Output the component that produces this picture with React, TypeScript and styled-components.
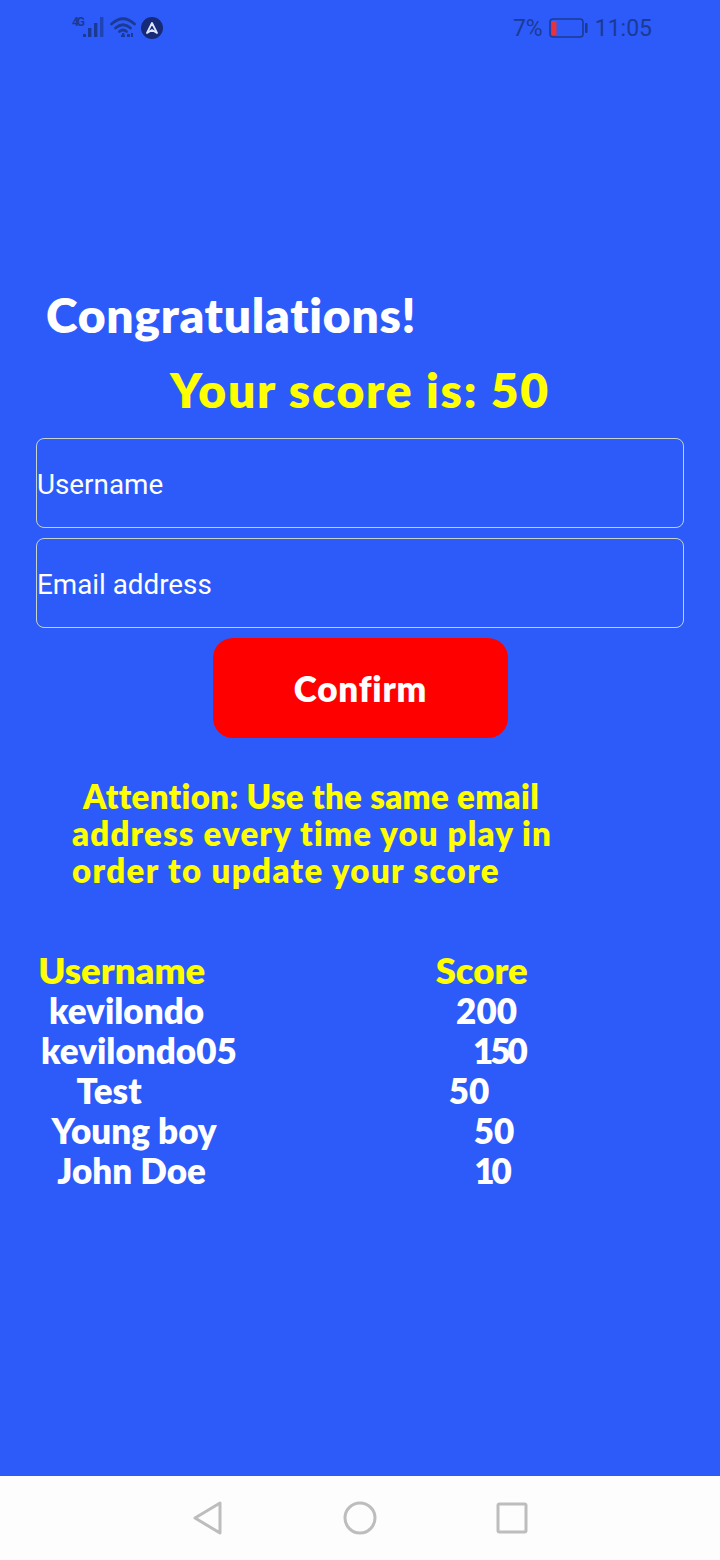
import React from "react";
import styled, { createGlobalStyle } from "styled-components";

const Global = createGlobalStyle`
  html, body { margin: 0; padding: 0; background: #2d5bfa; }
  * { box-sizing: border-box; }
`;
const hand = `"Lato", "Noto Sans", sans-serif`;
const Page = styled.div`
  width: 720px; height: 1560px; overflow: hidden; background: #2d5bfa;
  display: flex; flex-direction: column;
`;
const StatusBar = styled.div`
  height: 56px; flex: none; display: flex; justify-content: space-between; align-items: center;
  padding: 0 68px 0 71px; color: #1b3a94;
  font-family: "Roboto", sans-serif; font-size: 23px;
`;
const StatusGroup = styled.div`display: flex; align-items: center; gap: 6px;`;
const Main = styled.main`flex: 1; display: flex; flex-direction: column; padding-top: 229px;`;
const Title = styled.h1`
  margin: 0; padding-left: 46px; font: 800 48px/60px ${hand}; color: #fff; letter-spacing: 0.7px;
`;
const Score = styled.h2`
  margin: 15px 0 18px; text-align: center; font: 800 48px/60px ${hand}; color: #ffff00; letter-spacing: 1.7px;
`;
const Field = styled.input`
  display: block; width: 648px; height: 90px; margin: 0 36px 10px; padding: 2px 0 0; background: transparent;
  border: 1px solid #c4d4c8; border-radius: 8px; outline: none;
  font: 400 27.8px "Roboto", sans-serif; color: #fff;
  &::placeholder { color: #fff; opacity: 1; }
`;
const Confirm = styled.button`
  display: block; width: 295px; height: 100px; margin: 0 0 40px 213px; border: 0; border-radius: 20px;
  background: #ff0000; color: #fff; font: 800 35px ${hand}; letter-spacing: .8px;
`;
const Notice = styled.p`
  margin: 0 0 60px; padding-left: 72px; color: #ffff00;
  font: 800 33px/37.2px ${hand};
`;
const NoticeLine = styled.span<{ $spacing: number; $indent?: number }>`
  display: block; white-space: nowrap;
  letter-spacing: ${(p) => p.$spacing}px;
  margin-left: ${(p) => p.$indent ?? 0}px;
`;
const Table = styled.div`margin-left: -77px; width: 720px; display: flex; flex-direction: column;`;
const Row = styled.div<{ $head?: boolean }>`
  height: 40px; display: flex; justify-content: space-around; align-items: center;
  font: 800 ${(p) => (p.$head ? "36.5px" : "35px")}/40px ${hand};
  color: ${(p) => (p.$head ? "#ffff00" : "#fff")};
  white-space: nowrap;
`;
const Points = styled.span<{ $tight?: boolean }>`
  letter-spacing: ${(p) => (p.$tight ? "-3px" : "0")};
`;
const Nav = styled.nav`
  height: 84px; flex: none; background: #fdfdfe; display: flex; align-items: center; justify-content: center;
`;
const NavSlot = styled.div`width: 152px; display: flex; justify-content: center;`;

const rows = [
  ["kevilondo", "200"],
  ["kevilondo05", "150"],
  ["Test", "50"],
  ["Young boy", "50"],
  ["John Doe", "10"],
];

export default function App() {
  return (
    <>
      <Global />
      <Page>
        <StatusBar>
          <StatusGroup>
            <svg width="92" height="26" viewBox="0 0 92 26">
              <text x="1" y="10.5" fontSize="12" fontWeight="700" fontFamily="Roboto" fill="#1b3a94" textLength="13">4G</text>
              <g fill="#1b3a94">
                <rect x="12" y="19" width="3" height="3" />
                <rect x="17" y="13" width="3.4" height="9" />
                <rect x="23" y="8" width="3.4" height="14" />
                <rect x="29" y="2" width="3.4" height="20" opacity=".7" />
              </g>
              <g fill="none" stroke="#1b3a94" strokeWidth="2.8" strokeLinecap="round">
                <path d="M40.5 9 Q52 -1.5 63.5 9" />
                <path d="M44.5 13 Q52 6.5 59.5 13" />
                <path d="M48.5 16.5 Q52 13.5 55.5 16.5" />
              </g>
              <g fill="#1b3a94">
                <rect x="51" y="18" width="2.4" height="2.4" />
                <rect x="50" y="20" width="4" height="2" />
                <rect x="56" y="19" width="3" height="3" />
                <rect x="60" y="18" width="2" height="4" />
              </g>
              <circle cx="81" cy="13" r="11" fill="#172a78" />
              <path d="M76 18 L81 8 L86 18 L81 15 Z" fill="none" stroke="#dfe6ff" strokeWidth="1.8" strokeLinejoin="round" />
            </svg>
          </StatusGroup>
          <StatusGroup>
            <span>7%</span>
            <svg width="40" height="20" viewBox="0 0 40 20">
              <rect x="1" y="1" width="33" height="18" rx="3" fill="none" stroke="#1b3a94" strokeWidth="1.6" />
              <rect x="2.5" y="3" width="5" height="14" fill="#e8323c" />
              <rect x="36" y="5" width="2.6" height="10" rx="1" fill="#1b3a94" />
            </svg>
            <span>11:05</span>
          </StatusGroup>
        </StatusBar>
        <Main>
          <Title>Congratulations!</Title>
          <Score>Your score is: 50</Score>
          <Field placeholder="Username" />
          <Field placeholder="Email address" />
          <Confirm>Confirm</Confirm>
          <Notice>
            <NoticeLine $spacing={0.33} $indent={11}>Attention: Use the same email</NoticeLine>
            <NoticeLine $spacing={1.18}>address every time you play in</NoticeLine>
            <NoticeLine $spacing={1.38}>order to update your score</NoticeLine>
          </Notice>
          <Table>
            <Row $head><span>Username</span><span>Score</span></Row>
            {rows.map(([n, s]) => (
              <Row key={n}><span>{n}</span><Points $tight={s.startsWith("1")}>{s}</Points></Row>
            ))}
          </Table>
        </Main>
        <Nav>
          <NavSlot>
            <svg width="32" height="34" viewBox="0 0 32 34"><path d="M28 2 L3 17 L28 32 Z" fill="none" stroke="#bdbdbd" strokeWidth="3" strokeLinejoin="round" /></svg>
          </NavSlot>
          <NavSlot>
            <svg width="34" height="34" viewBox="0 0 34 34"><circle cx="17" cy="17" r="15" fill="none" stroke="#bdbdbd" strokeWidth="3" /></svg>
          </NavSlot>
          <NavSlot>
            <svg width="32" height="32" viewBox="0 0 32 32"><rect x="2" y="2" width="28" height="28" rx="1.5" fill="none" stroke="#bdbdbd" strokeWidth="3" /></svg>
          </NavSlot>
        </Nav>
      </Page>
    </>
  );
}
